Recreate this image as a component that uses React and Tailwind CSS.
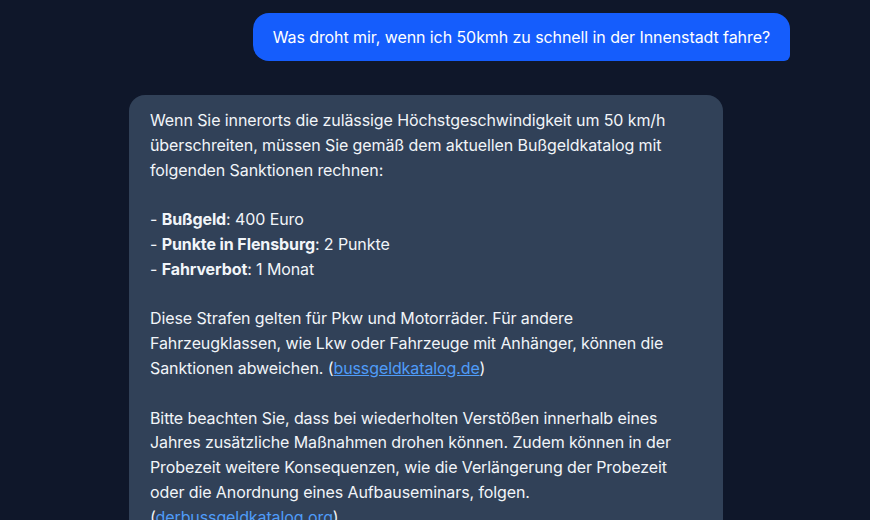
import React from "react";

const Msg = ({ children }) => (
  <div className="whitespace-pre-wrap">{children}</div>
);

export default function App() {
  return (
    <div
      className="min-h-screen w-full bg-[#0f172a] text-white overflow-hidden"
      style={{ fontFamily: "Inter, 'Noto Sans', sans-serif" }}
    >
      <div className="flex flex-col pt-[13px]">
        {/* User message */}
        <div className="flex justify-end pr-[80px]">
          <div className="bg-[#155dfc] rounded-2xl rounded-br-md px-5 h-[48px] flex items-center text-[16px] tracking-[-0.08px] text-white">
            Was droht mir, wenn ich 50kmh zu schnell in der Innenstadt fahre?
          </div>
        </div>

        {/* Assistant message */}
        <div className="flex pl-[129px] mt-[34px]">
          <div className="bg-[#314158] rounded-2xl w-[594px] px-[21px] pt-[13px] pb-4 text-[16px] leading-[24.8px] tracking-[-0.1px] text-[#f1f5f9]">
            <Msg>
              Wenn Sie innerorts die zulässige Höchstgeschwindigkeit um 50 km/h überschreiten, müssen Sie gemäß dem aktuellen Bußgeldkatalog mit folgenden Sanktionen rechnen:
              {"\n\n"}- <strong>Bußgeld</strong>: 400 Euro
              {"\n"}- <strong>Punkte in Flensburg</strong>: 2 Punkte
              {"\n"}- <strong>Fahrverbot</strong>: 1 Monat
              {"\n\n"}Diese Strafen gelten für Pkw und Motorräder. Für andere Fahrzeugklassen, wie Lkw oder Fahrzeuge mit Anhänger, können die Sanktionen abweichen. (
              <a href="#" className="text-[#4f9cf9] underline">bussgeldkatalog.de</a>)
              {"\n\n"}Bitte beachten Sie, dass bei wiederholten Verstößen innerhalb eines Jahres zusätzliche Maßnahmen drohen können. Zudem können in der Probezeit weitere Konsequenzen, wie die Verlängerung der Probezeit oder die Anordnung eines Aufbauseminars, folgen. (
              <a href="#" className="text-[#4f9cf9] underline">derbussgeldkatalog.org</a>)
            </Msg>
          </div>
        </div>
      </div>
    </div>
  );
}
